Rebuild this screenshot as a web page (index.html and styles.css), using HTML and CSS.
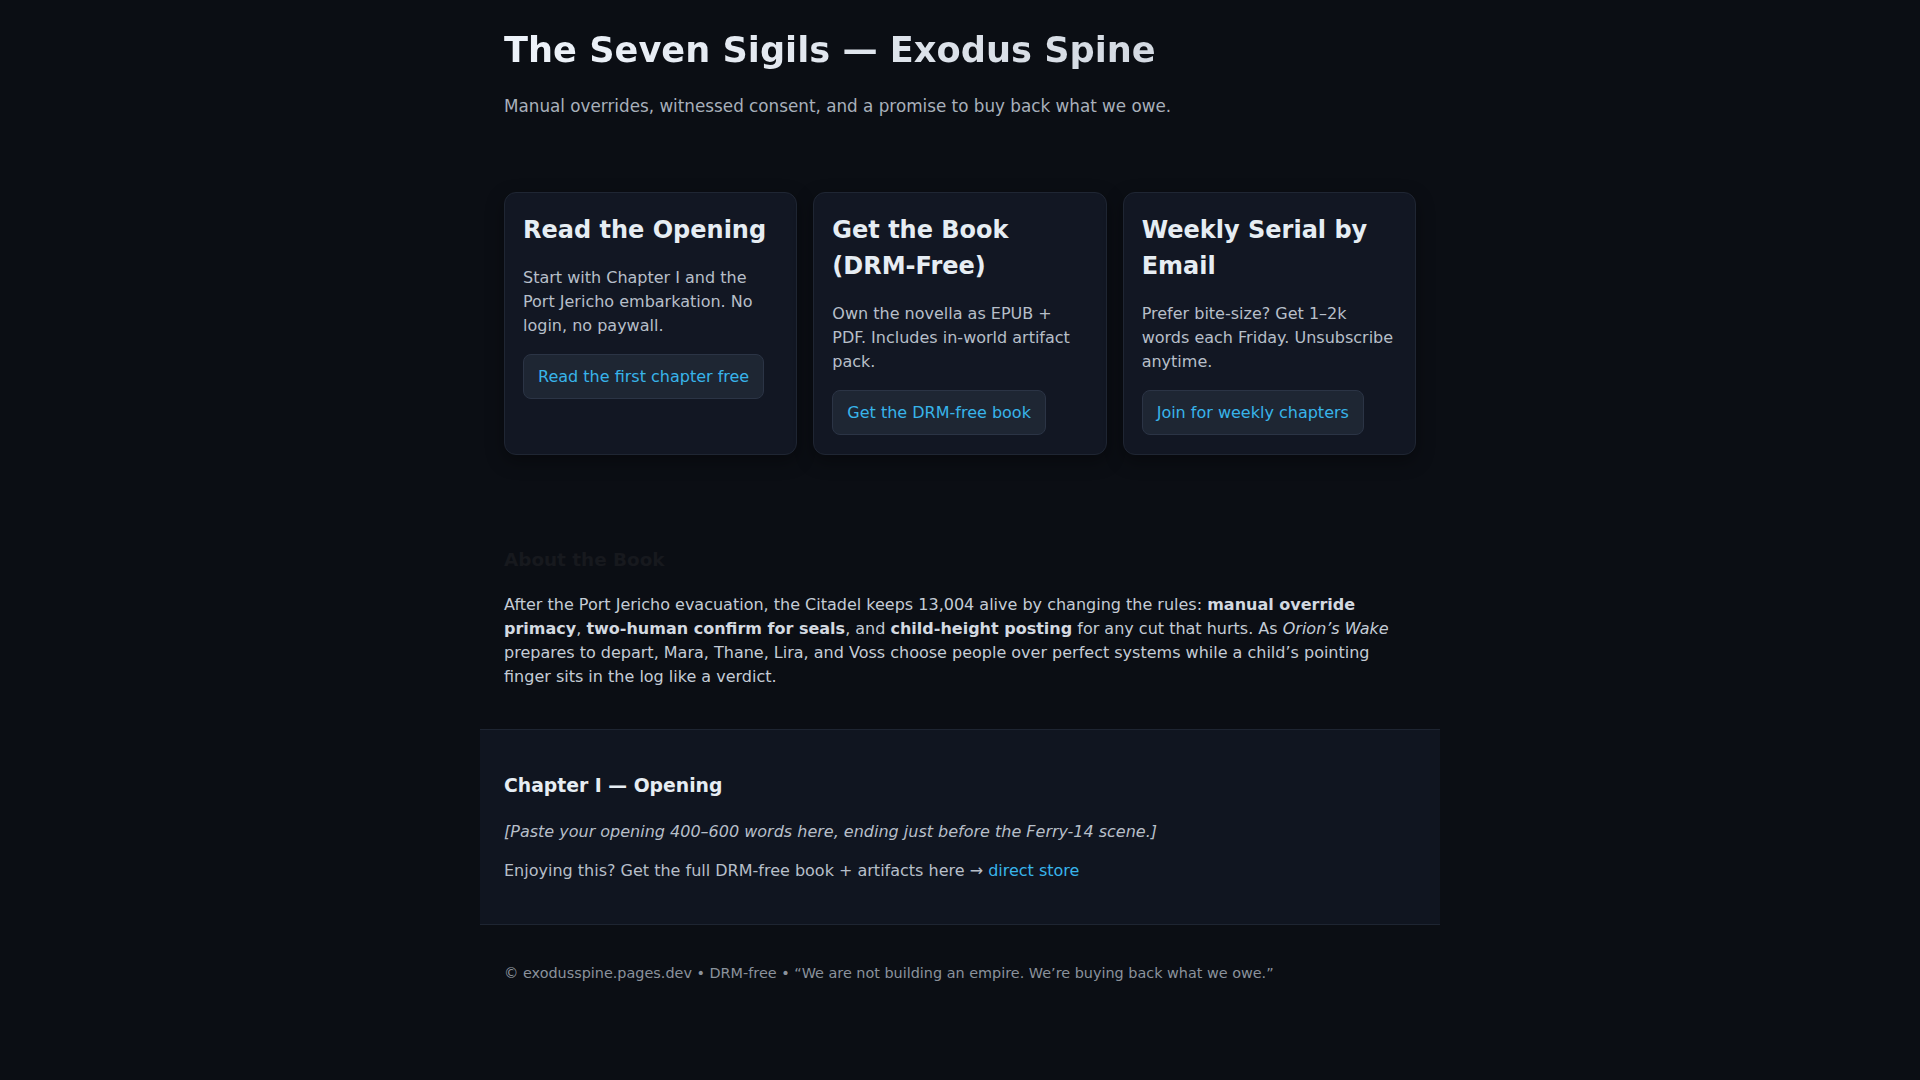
FILE: index.html
```html
<!DOCTYPE html>
<html lang="en">
<head>
<meta charset="utf-8">
<title>The Seven Sigils — Exodus Spine</title>
<link rel="stylesheet" href="styles.css">
</head>
<body>
<header class="hero wrap">
  <h1 class="title">The Seven Sigils — Exodus Spine</h1>
  <p class="tagline">Manual overrides, witnessed consent, and a promise to buy back what we owe.</p>
</header>

<main>
  <section class="wrap cards">
    <article class="card">
      <h3>Read the Opening</h3>
      <p>Start with Chapter I and the Port Jericho embarkation. No login, no paywall.</p>
      <a class="btn" href="#chapter">Read the first chapter free</a>
    </article>
    <article class="card">
      <h3>Get the Book (DRM-Free)</h3>
      <p>Own the novella as EPUB + PDF. Includes in-world artifact pack.</p>
      <a class="btn" href="#">Get the DRM-free book</a>
    </article>
    <article class="card">
      <h3>Weekly Serial by Email</h3>
      <p>Prefer bite-size? Get 1–2k words each Friday. Unsubscribe anytime.</p>
      <a class="btn" href="#">Join for weekly chapters</a>
    </article>
  </section>

  <section class="wrap about">
    <h2>About the Book</h2>
    <p>After the Port Jericho evacuation, the Citadel keeps 13,004 alive by changing the rules: <strong>manual override primacy</strong>, <strong>two-human confirm for seals</strong>, and <strong>child-height posting</strong> for any cut that hurts. As <em>Orion’s Wake</em> prepares to depart, Mara, Thane, Lira, and Voss choose people over perfect systems while a child’s pointing finger sits in the log like a verdict.</p>
  </section>

  <section class="chapter" id="chapter">
    <div class="chapter-inner">
      <h3>Chapter I — Opening</h3>
      <p class="placeholder">[Paste your opening 400–600 words here, ending just before the Ferry-14 scene.]</p>
      <p class="cta">Enjoying this? Get the full DRM-free book + artifacts here → <a href="#">direct store</a></p>
    </div>
  </section>
</main>

<footer class="wrap foot">
  <p>© exodusspine.pages.dev • DRM-free • “We are not building an empire. We’re buying back what we owe.”</p>
</footer>
</body>
</html>
```

FILE: styles.css
```css
* { box-sizing: border-box; }
html, body { margin: 0; padding: 0; }
body {
  background: #0b0e14;
  color: #c9d1d9;
  font-family: "DejaVu Sans", Verdana, sans-serif;
  font-size: 16px;
  line-height: 1.5;
}
.wrap {
  max-width: 960px;
  margin: 0 auto;
  padding: 0 24px;
}
.hero { padding-top: 28px; padding-bottom: 73px; }
.title {
  margin: 0;
  font-size: 35.2px;
  line-height: 44px;
  font-weight: 700;
  background: linear-gradient(90deg, #eef3fa 0%, #c9cfd8 100%);
  -webkit-background-clip: text;
  background-clip: text;
  color: transparent;
}
.tagline {
  margin: 22px 0 0;
  color: #a8b0bb;
  font-size: 16.8px;
  line-height: 1.5;
}
.cards {
  display: grid;
  grid-template-columns: repeat(3, 1fr);
  gap: 16px;
  align-items: stretch;
}
.card {
  background: #121723;
  border: 1px solid #1f2633;
  border-radius: 12px;
  padding: 19px 18px 19px;
  box-shadow: 0 6px 18px rgba(0,0,0,0.35);
}
.card h3 {
  margin: 0 0 18px;
  font-size: 24px;
  line-height: 36px;
  color: #e6edf3;
}
.card p {
  margin: 0 0 16px;
  color: #b7bfc9;
  font-size: 16px;
  line-height: 1.5;
}
.btn {
  display: inline-block;
  padding: 10px 14px;
  background: #1e2633;
  border: 1px solid #2b3445;
  border-radius: 8px;
  color: #38b4ea;
  text-decoration: none;
  font-size: 16px;
  line-height: 23px;
}
.about { padding-top: 91px; padding-bottom: 40px; }
.about h2 {
  margin: 0 0 19px;
  font-size: 18.4px;
  line-height: 1.5;
  color: #17191e;
}
.about p { margin: 0; color: #c4ccd6; font-size: 16px; line-height: 1.5; }
.about strong { color: #d3d9e0; }
.chapter {
  max-width: 960px;
  margin: 0 auto;
  background: #101520;
  border-top: 1px solid #1e2532;
  border-bottom: 1px solid #1e2532;
}
.chapter-inner { padding: 42px 24px 41px; }
.chapter h3 {
  margin: 0 0 20px;
  font-size: 18.8px;
  line-height: 1.5;
  color: #e6edf3;
}
.chapter p { margin: 0 0 15px; color: #b7bfc9; }
.chapter p.cta { margin-bottom: 0; }
.chapter .placeholder { font-style: italic; }
.chapter a { color: #38b4ea; text-decoration: none; }
.foot { padding-top: 38px; padding-bottom: 40px; }
.foot p { margin: 0; color: #8a929c; font-size: 14.4px; line-height: 1.5; }
```
